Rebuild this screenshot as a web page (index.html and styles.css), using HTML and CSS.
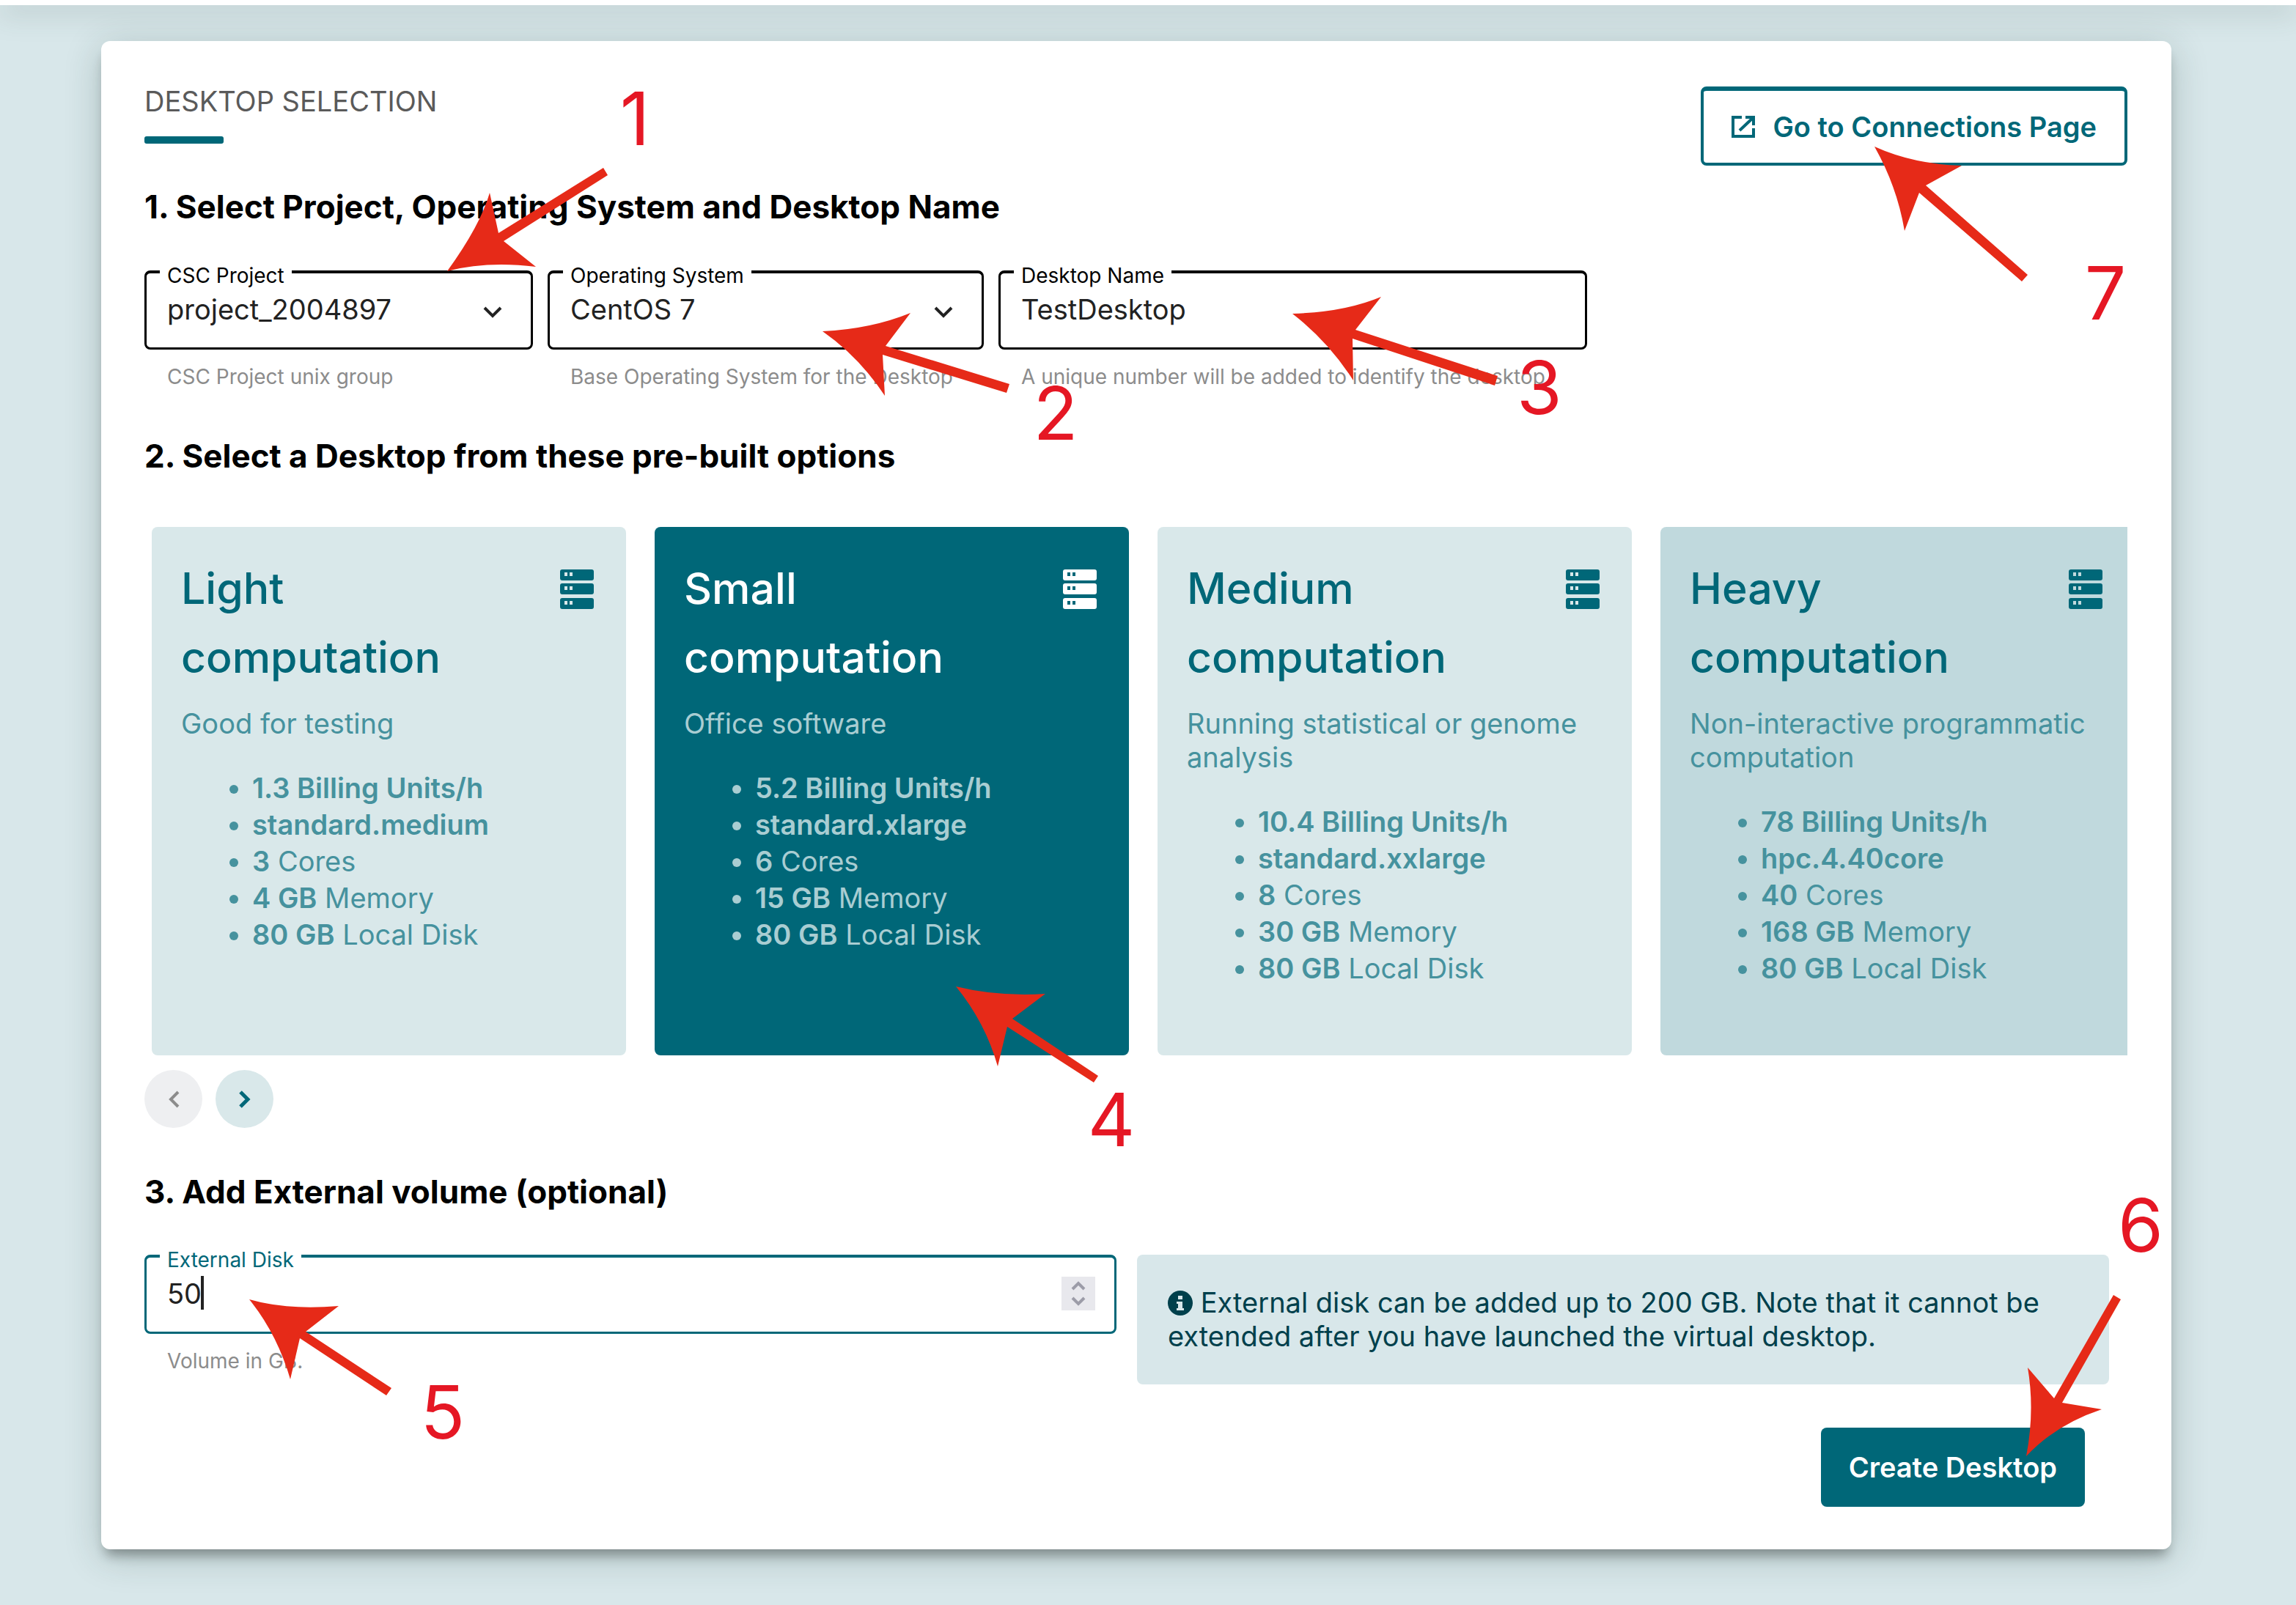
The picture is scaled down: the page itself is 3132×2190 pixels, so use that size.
FILE: index.html
```html
<!DOCTYPE html>
<html lang="en">
<head>
<meta charset="utf-8">
<title>Desktop selection</title>
<link rel="stylesheet" href="styles.css">
</head>
<body>
<svg class="symbols" aria-hidden="true">
  <symbol id="server" viewBox="0 0 46 54">
    <path fill-rule="evenodd" d="M3 0h40q3 0 3 3v9q0 3-3 3H3q-3 0-3-3V3q0-3 3-3zM6 4v5h4V4zM13 4v5h4V4zM3 19h40q3 0 3 3v9q0 3-3 3H3q-3 0-3-3v-9q0-3 3-3zM6 23v5h4v-5zM13 23v5h4v-5zM3 39h40q3 0 3 3v9q0 3-3 3H3q-3 0-3-3v-9q0-3 3-3zM6 43v5h4v-5zM13 43v5h4v-5z"/>
  </symbol>
  <symbol id="chevron" viewBox="0 0 28 18">
    <path d="M3 3l11 11L25 3" fill="none" stroke="currentColor" stroke-width="4"/>
  </symbol>
</svg>
<header class="topbar"></header>
<main class="panel">
  <div class="panel-head">
    <h1 class="tab">DESKTOP SELECTION</h1>
    <a class="btn btn-outline" href="#connections">
      <svg class="icon-open" viewBox="0 0 32 30" aria-hidden="true"><path d="M14 2H2v26h28V17M19 2h11v11M29 3L11 20" fill="none" stroke="currentColor" stroke-width="4"/></svg>
      Go to Connections Page
    </a>
  </div>

  <h2 class="step">1. Select Project, Operating System and Desktop Name</h2>
  <div class="fields">
    <div class="field">
      <div class="box">
        <label class="label" for="project">CSC Project</label>
        <select class="control" id="project"><option>project_2004897</option></select>
        <svg class="arrow-down" aria-hidden="true"><use href="#chevron"/></svg>
      </div>
      <p class="hint">CSC Project unix group</p>
    </div>
    <div class="field">
      <div class="box">
        <label class="label" for="os">Operating System</label>
        <select class="control" id="os"><option>CentOS 7</option></select>
        <svg class="arrow-down" aria-hidden="true"><use href="#chevron"/></svg>
      </div>
      <p class="hint">Base Operating System for the Desktop</p>
    </div>
    <div class="field">
      <div class="box">
        <label class="label" for="name">Desktop Name</label>
        <input class="control" id="name" type="text" value="TestDesktop">
      </div>
      <p class="hint">A unique number will be added to identify the desktop.</p>
    </div>
  </div>

  <h2 class="step">2. Select a Desktop from these pre-built options</h2>
  <div class="carousel">
    <article class="card">
      <div class="card-head"><h3 class="card-title">Light<br>computation</h3><svg class="server" aria-hidden="true"><use href="#server"/></svg></div>
      <p class="card-text">Good for testing</p>
      <ul class="specs"><li><b>1.3 Billing Units/h</b></li><li><b>standard.medium</b></li><li><b>3</b> Cores</li><li><b>4 GB</b> Memory</li><li><b>80 GB</b> Local Disk</li></ul>
    </article>
    <article class="card selected">
      <div class="card-head"><h3 class="card-title">Small<br>computation</h3><svg class="server" aria-hidden="true"><use href="#server"/></svg></div>
      <p class="card-text">Office software</p>
      <ul class="specs"><li><b>5.2 Billing Units/h</b></li><li><b>standard.xlarge</b></li><li><b>6</b> Cores</li><li><b>15 GB</b> Memory</li><li><b>80 GB</b> Local Disk</li></ul>
    </article>
    <article class="card">
      <div class="card-head"><h3 class="card-title">Medium<br>computation</h3><svg class="server" aria-hidden="true"><use href="#server"/></svg></div>
      <p class="card-text">Running statistical or genome analysis</p>
      <ul class="specs"><li><b>10.4 Billing Units/h</b></li><li><b>standard.xxlarge</b></li><li><b>8</b> Cores</li><li><b>30 GB</b> Memory</li><li><b>80 GB</b> Local Disk</li></ul>
    </article>
    <article class="card hovered">
      <div class="card-head"><h3 class="card-title">Heavy<br>computation</h3><svg class="server" aria-hidden="true"><use href="#server"/></svg></div>
      <p class="card-text">Non-interactive programmatic computation</p>
      <ul class="specs"><li><b>78 Billing Units/h</b></li><li><b>hpc.4.40core</b></li><li><b>40</b> Cores</li><li><b>168 GB</b> Memory</li><li><b>80 GB</b> Local Disk</li></ul>
    </article>
  </div>
  <div class="pager">
    <button class="round" type="button" aria-label="Previous" disabled><svg viewBox="0 0 18 26" aria-hidden="true"><path d="M15 3L5 13l10 10" fill="none" stroke="currentColor" stroke-width="4"/></svg></button>
    <button class="round next" type="button" aria-label="Next"><svg viewBox="0 0 18 26" aria-hidden="true"><path d="M3 3l10 10L3 23" fill="none" stroke="currentColor" stroke-width="5"/></svg></button>
  </div>

  <h2 class="step step-volume">3. Add External volume (optional)</h2>
  <div class="volume">
    <div class="field">
      <div class="box focused">
        <label class="label" for="disk">External Disk</label>
        <input class="control" id="disk" type="number" value="50">
        <span class="caret"></span>
        <svg class="spinner" viewBox="0 0 46 46" aria-hidden="true"><path d="M0 0h46v46H0z" fill="#e8e8ed"/><path d="M15 17l8-8 8 8M15 29l8 8 8-8" fill="none" stroke="#9c9ca8" stroke-width="4"/></svg>
      </div>
      <p class="hint">Volume in GB.</p>
    </div>
    <p class="note"><svg class="info" viewBox="0 0 34 34" aria-hidden="true"><circle cx="17" cy="17" r="17" fill="currentColor"/><path d="M14 7h6v5h-6zM12 15h8v9h2v3H12v-3h2v-6h-2z" fill="#d8e7ea"/></svg> External disk can be added up to 200 GB. Note that it cannot be extended after you have launched the virtual desktop.</p>
  </div>
  <div class="actions"><button class="btn btn-solid" type="button">Create Desktop</button></div>
</main>

<svg class="callouts" viewBox="0 0 3132 2190">
  <g class="callout-arrows">
    <path d="M610 370Q655 308 668 263L680 318L823 229L829 239L687 329L731 364Q664 356 610 370z"/>
    <path d="M1122 452Q1188 449 1242 427L1208 472L1377 524L1373 536L1204 484L1207 540Q1172 487 1122 452z"/>
    <path d="M1763 428Q1834 426 1884 405L1849 450L2043 513L2039 526L1845 462L1846 519Q1812 466 1763 428z"/>
    <path d="M1304 1346Q1360 1360 1426 1356L1381 1390L1498 1468L1492 1477L1374 1401L1361 1455Q1344 1395 1304 1346z"/>
    <path d="M340 1773Q392 1788 462 1782L417 1817L534 1894L527 1904L409 1826L396 1882Q378 1820 340 1773z"/>
    <path d="M2764 1987Q2776 1925 2766 1866L2802 1908L2883 1767L2893 1773L2813 1914L2867 1923Q2804 1944 2764 1987z"/>
    <path d="M2557 200Q2610 224 2676 226L2627 253L2766 375L2758 384L2618 263L2598 315Q2588 255 2557 200z"/>
  </g>
  <g class="callout-numbers">
    <text x="866" y="198">1</text>
    <text x="1440" y="600">2</text>
    <text x="2100" y="565">3</text>
    <text x="1516" y="1564">4</text>
    <text x="604" y="1963">5</text>
    <text x="2920" y="1708">6</text>
    <text x="2872" y="436">7</text>
  </g>
</svg>
</body>
</html>
```
FILE: styles.css
```css
* { box-sizing: border-box; }
body {
  margin: 0;
  position: relative;
  min-height: 100vh;
  background: #d8e7ea;
  color: #222;
  font-family: Inter, "Noto Sans", sans-serif;
  font-size: 38px;
}
h1, h2, h3, p, ul { margin: 0; padding: 0; }
button, input, select { font-family: inherit; }
.symbols { display: none; }

.topbar { height: 7px; background: #fff; box-shadow: 0 6px 36px rgba(60, 80, 70, .5); }
.panel {
  margin: 49px 170px 76px 138px;
  padding: 62px 60px 58px 59px;
  background: #fff;
  border-radius: 12px;
  box-shadow: 0 14px 16px -6px rgba(0, 0, 0, .32), 0 10px 50px rgba(30, 60, 50, .24);
  position: relative;
}
.panel-head { display: flex; justify-content: space-between; align-items: flex-start; }
.tab { font-size: 38px; line-height: 40px; font-weight: 400; color: #5a5a5a; }
.tab::after { content: ""; display: block; width: 108px; height: 10px; margin-top: 28px; border-radius: 3px; background: #006778; }

.btn {
  display: flex; align-items: center; justify-content: center;
  height: 108px;
  padding: 0 38px;
  border-radius: 8px;
  font-size: 38px; font-weight: 600;
  text-decoration: none;
}
.btn-outline { gap: 24px; border: 4px solid #006778; border-top-width: 6px; color: #006778; }
.btn-solid { border: 0; background: #006778; color: #fff; }
.icon-open { width: 32px; height: 30px; }

.step { margin-top: 28px; font-size: 44px; line-height: 56px; font-weight: 700; color: #000; }

.fields { display: grid; grid-template-columns: 530fr 595fr 803fr; gap: 20px; max-width: 1968px; margin: 59px 0 65px; }
.box { position: relative; height: 108px; border: 3px solid #000; border-top-width: 4px; border-radius: 8px; color: #000; }
.focused { border-color: #006778; color: #006778; }
.label { position: absolute; left: 18px; top: -12px; padding: 0 10px; background: #fff; font-size: 28px; line-height: 30px; }
.control {
  width: 100%; height: 100%;
  padding: 0 28px 4px;
  border: 0; outline: 0; background: none; appearance: none;
  color: #222; font-size: 38px;
  caret-color: transparent;
}
.control::-webkit-inner-spin-button { appearance: none; margin: 0; }
.arrow-down { position: absolute; right: 38px; top: 44px; width: 28px; height: 18px; color: #222; pointer-events: none; }
.hint { margin: 22px 0 0 31px; font-size: 28px; line-height: 30px; color: #8c8c8c; white-space: nowrap; }
.caret { position: absolute; left: 74px; top: 25px; width: 4px; height: 46px; background: #222; }
.spinner { position: absolute; right: 26px; top: 26px; width: 46px; height: 46px; }

.carousel { display: flex; gap: 39px; margin-top: 69px; padding-left: 10px; overflow: hidden; }
.card { flex: 0 0 647px; min-height: 721px; padding: 37px 40px; border-radius: 8px; background: #d9e8ea; color: #006778; }
.card-head { display: flex; justify-content: space-between; }
.card-title { font-size: 59px; line-height: 94px; font-weight: 500; }
.server { width: 46px; height: 54px; margin: 21px 4px 0 0; fill: currentColor; }
.card-text { margin-top: 20px; line-height: 46px; color: #46929e; white-space: normal; margin-right: -10px; }
.specs { margin-top: 40px; padding-left: 97px; list-style: disc; color: #46929e; line-height: 50px; }
.specs b { font-weight: 600; }
.selected { background: #006778; color: #fff; }
.selected .card-text, .selected .specs { color: #a9cdd2; }
.hovered { background: #c0d9dd; }

.pager { display: flex; gap: 18px; margin-top: 20px; }
.round { display: flex; align-items: center; justify-content: center; width: 79px; height: 79px; padding: 0; border: 0; border-radius: 50%; background: #eeeff1; color: #8c8c8c; }
.round svg { width: 18px; height: 26px; }
.next { background: #d9e8ea; color: #006778; }

.step-volume { margin-top: 59px; }
.volume { display: grid; grid-template-columns: 1fr 1fr; gap: 28px; margin: 58px 25px 59px 0; }
.note { min-height: 177px; padding: 42px; border-radius: 8px; background: #d8e7ea; color: #00404c; line-height: 46px; }
.info { width: 34px; height: 34px; vertical-align: -4px; }
.actions { display: flex; justify-content: flex-end; padding-right: 58px; }

.callouts { position: absolute; left: 0; top: 0; width: 100%; pointer-events: none; }
.callout-arrows { fill: #e62a18; }
.callout-numbers { fill: #e51724; font-size: 100px; text-anchor: middle; }
```
